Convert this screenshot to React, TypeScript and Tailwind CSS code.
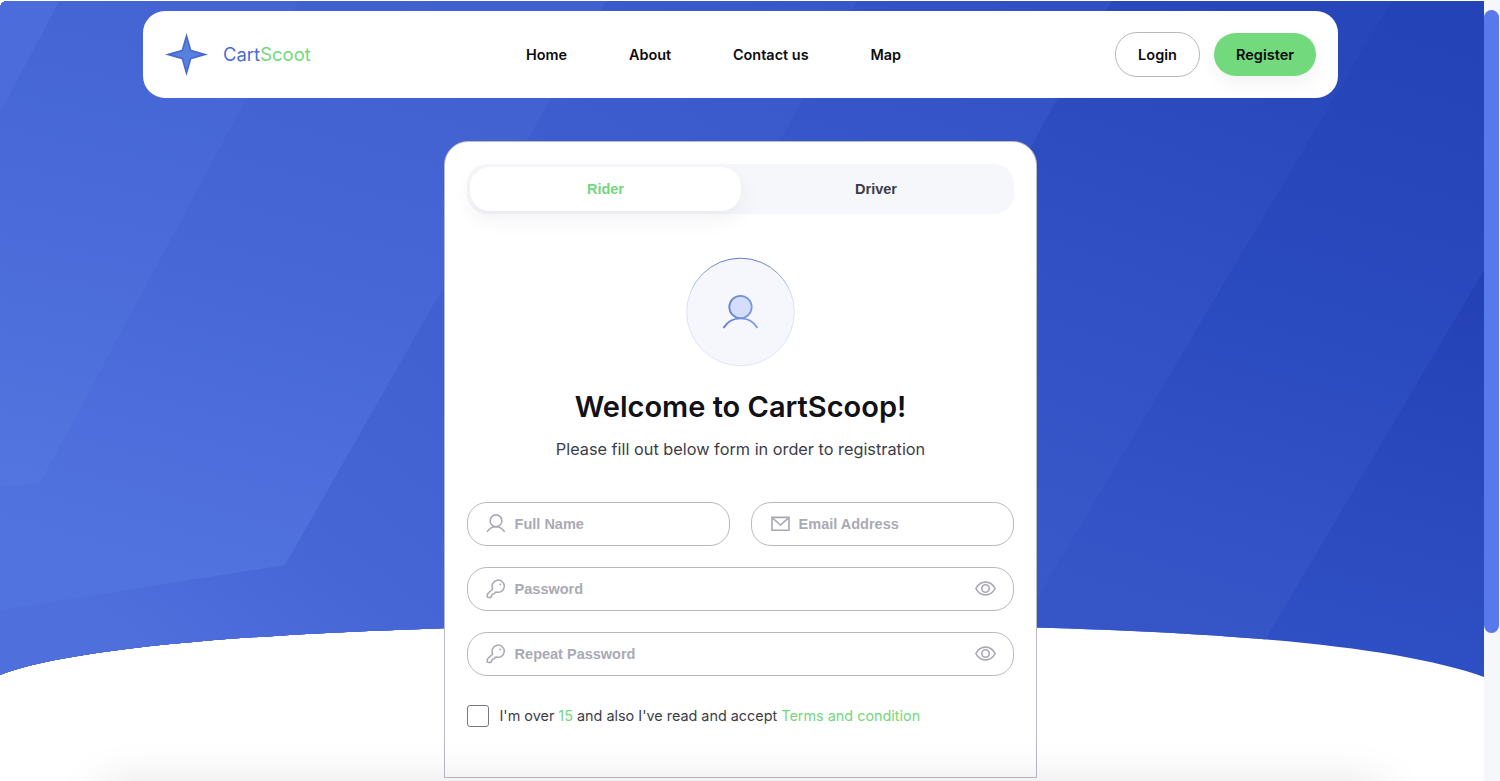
import React from "react";

const inter = "font-['Inter',sans-serif]";

function Backdrop() {
  return (
    <svg className="absolute inset-0 h-[781px] w-[1484px]" viewBox="0 0 1484 781" aria-hidden="true">
      <defs>
        <clipPath id="hero">
          <path d="M8 1H1484V677C1370 636 1110 624 742 624S90 640 0 675V9Q0 1 8 1Z" />
        </clipPath>
        <linearGradient id="g1" gradientUnits="userSpaceOnUse" x1="1484" y1="270" x2="1380" y2="670">
          <stop offset="0" stopColor="#2341b5" />
          <stop offset="1" stopColor="#2f50c4" />
        </linearGradient>
        <linearGradient id="g2" gradientUnits="userSpaceOnUse" x1="1420" y1="20" x2="1240" y2="640">
          <stop offset="0" stopColor="#2443b6" />
          <stop offset="0.5" stopColor="#2a4abf" />
          <stop offset="1" stopColor="#3656c8" />
        </linearGradient>
        <linearGradient id="g3" gradientUnits="userSpaceOnUse" x1="1280" y1="0" x2="1070" y2="600">
          <stop offset="0" stopColor="#2746ba" />
          <stop offset="0.5" stopColor="#3050c3" />
          <stop offset="1" stopColor="#3959cb" />
        </linearGradient>
        <linearGradient id="g4" gradientUnits="userSpaceOnUse" x1="1100" y1="0" x2="900" y2="600">
          <stop offset="0" stopColor="#2f4fc3" />
          <stop offset="1" stopColor="#4464d4" />
        </linearGradient>
        <linearGradient id="g4b" gradientUnits="userSpaceOnUse" x1="820" y1="0" x2="420" y2="640">
          <stop offset="0" stopColor="#3858ca" />
          <stop offset="0.5" stopColor="#4060d1" />
          <stop offset="1" stopColor="#4768d7" />
        </linearGradient>
        <linearGradient id="g5" gradientUnits="userSpaceOnUse" x1="420" y1="0" x2="260" y2="600">
          <stop offset="0" stopColor="#4060d0" />
          <stop offset="0.5" stopColor="#4767d7" />
          <stop offset="1" stopColor="#5173df" />
        </linearGradient>
        <linearGradient id="g6" gradientUnits="userSpaceOnUse" x1="180" y1="0" x2="80" y2="490">
          <stop offset="0" stopColor="#4464d4" />
          <stop offset="0.5" stopColor="#4a6bd9" />
          <stop offset="1" stopColor="#5275df" />
        </linearGradient>
        <linearGradient id="g0" gradientUnits="userSpaceOnUse" x1="440" y1="300" x2="160" y2="660">
          <stop offset="0" stopColor="#4060d0" />
          <stop offset="0.6" stopColor="#4666d6" />
          <stop offset="1" stopColor="#4e6fdc" />
        </linearGradient>
      </defs>
      <g clipPath="url(#hero)">
        <path d="M0 0H1484V781H0Z" fill="url(#g1)" />
        <path d="M0 0H1484V270L1265 640L1182 781H0Z" fill="url(#g2)" />
        <path d="M0 0H1392L1020 627L930 781H0Z" fill="url(#g3)" />
        <path d="M0 0H1112L780 600L680 781H0Z" fill="url(#g4)" />
        <path d="M0 0H858L525 600L425 781H0Z" fill="url(#g4b)" />
        <path d="M0 300H450V781H0Z" fill="url(#g0)" />
        <path d="M0 0H607L285 565L0 610Z" fill="url(#g5)" />
        <path d="M0 0H299L40 483L0 487Z" fill="url(#g6)" />
        <path d="M0 0H60L0 113Z" fill="#4b6cda" />
      </g>
    </svg>
  );
}

function StarLogo() {
  return (
    <svg className="size-[43px]" viewBox="0 0 43 43" aria-hidden="true">
      <path d="M21.5 0L26.300 16.700L43 21.500L26.300 26.300L21.500 43L16.700 26.300L0 21.500L16.700 16.700Z" fill="#4868ce" />
      <path d="M21.5 6L25 18L36 21.5L25 25L21.5 37L18 25L7 21.5L18 18Z" fill="#5682de" />
    </svg>
  );
}

function UserIcon() {
  return (
    <svg className="size-5" viewBox="0 0 20 20" fill="none" stroke="#a8a8b3" strokeWidth="1.6" aria-hidden="true">
      <circle cx="10" cy="6.800" r="5.900" />
      <path d="M1.100 17.900C2.900 14.700 6 12.700 9.800 12.700S16.800 14.700 18.600 17.900" />
    </svg>
  );
}

function MailIcon() {
  return (
    <svg className="size-5" viewBox="0 0 20 20" fill="none" stroke="#a8a8b3" strokeWidth="1.6" aria-hidden="true">
      <path d="M2 3.400H19V16.300H2Z" />
      <path d="M2.400 3.800L10.500 11L18.600 3.800" />
    </svg>
  );
}

function KeyIcon() {
  return (
    <svg className="size-5" viewBox="0 0 20 20" fill="none" stroke="#a8a8b3" strokeWidth="1.5" strokeLinejoin="round" strokeLinecap="round" aria-hidden="true">
      <path d="M6.600 9.700A6.100 6.100 0 1 1 10.200 13C9.200 12.900 8.900 13.500 8.700 14.300C8.500 15 7.900 15.100 7 15.100C6.100 15.100 5.800 15.600 5.700 16.600C5.500 18.200 4.400 18.700 2.800 18.600C1.300 18.600 .9 17.900 1.100 16.500C1.200 15.300 1.700 14.700 2.600 13.800L6.200 10.500C6.500 10.200 6.600 10 6.600 9.700Z" />
      <circle cx="14.300" cy="5.500" r=".95" fill="#a8a8b3" stroke="none" />
    </svg>
  );
}

function EyeIcon() {
  return (
    <svg className="mb-px h-[15px] w-[21px]" viewBox="0 0 21 15" fill="none" stroke="#a8a8b3" strokeWidth="1.6" aria-hidden="true">
      <path d="M.9 7.500C3 3.300 6.400 1.100 10.500 1.100S18 3.300 20.100 7.500C18 11.700 14.600 13.900 10.500 13.900S3 11.700 .9 7.500Z" />
      <circle cx="10.500" cy="7.500" r="3.700" />
    </svg>
  );
}

function Field({ icon, label, secret = false }: { icon: React.ReactNode; label: string; secret?: boolean }) {
  return (
    <div className="flex h-11 w-full items-center rounded-[20px] border border-[#b9b9c0] pr-[17px] pl-[18px] font-['Liberation_Sans',sans-serif] text-[14.5px] font-bold text-[#aaaab4]">
      {icon}
      <span className="ml-[8.6px] flex-1 pt-px">{label}</span>
      {secret && <EyeIcon />}
    </div>
  );
}

function Header() {
  return (
    <header className={`relative mx-auto flex h-[87px] w-[1195px] items-center rounded-[22px] bg-white px-[22px] ${inter}`}>
      <StarLogo />
      <span className="ml-[15px] w-[303px] pt-px text-[18.4px] tracking-[0.05px] text-[#4a6bd6]">
        Cart<span className="text-[#73d77d]">Scoot</span>
      </span>
      <nav className="flex gap-[61.8px] text-[14.45px] font-semibold text-[#0c0c10]">
        <a>Home</a>
        <a>About</a>
        <a>Contact us</a>
        <a>Map</a>
      </nav>
      <div className="ml-auto flex items-center gap-[14px] text-[14.5px] font-semibold text-[#0c0c10]">
        <button className="h-[45px] w-[85px] rounded-[22px] border border-[#b9b9c0]">Login</button>
        <button className="h-[43px] w-[102px] rounded-[22px] bg-[#73d97d] shadow-[0_8px_18px_rgba(0,0,0,0.05)]">Register</button>
      </div>
    </header>
  );
}

function Avatar() {
  return (
    <svg className="mt-[43px] ml-[218px] block size-[110px]" viewBox="0 0 110 110" fill="none" aria-hidden="true">
      <defs>
        <linearGradient id="ring" x1="0" y1="0" x2="0" y2="1">
          <stop offset="0" stopColor="#5a78cc" />
          <stop offset="0.35" stopColor="#d4dff9" />
          <stop offset="1" stopColor="#e0e7fa" />
        </linearGradient>
        <linearGradient id="person" gradientUnits="userSpaceOnUse" x1="37" y1="0" x2="73" y2="0">
          <stop offset="0" stopColor="#5f7cca" />
          <stop offset="1" stopColor="#819fe8" />
        </linearGradient>
      </defs>
      <circle cx="55.5" cy="55" r="53.8" fill="#f5f7fd" stroke="url(#ring)" />
      <path d="M38.500 71C42 65 48 61.300 55.500 61.300S69 65 72.500 71" stroke="url(#person)" strokeWidth="1.8" />
      <circle cx="55.500" cy="50" r="11.200" fill="#d4defa" stroke="url(#person)" strokeWidth="1.800" />
    </svg>
  );
}

export default function App() {
  return (
    <div className="relative flex h-[781px] w-[1500px] overflow-hidden bg-white">
      <main className="relative h-[781px] w-[1484px] shrink-0 overflow-hidden">
        <Backdrop />
        <div className="relative pt-[11px] pr-[3px]">
          <Header />
          <section className="relative mx-auto mt-[43px] h-[637px] w-[593px] rounded-t-[24px] border border-[#b9bac5] bg-white px-[22px] pt-[22px]">
            <div className="flex h-[50px] w-[547px] rounded-[20px] bg-[#f6f7fa] p-[3px] font-['Liberation_Sans',sans-serif] text-[14.5px] font-bold">
              <button className="h-11 w-[271px] rounded-[20px] bg-white pt-px text-[#73d77d] shadow-[0_8px_22px_rgba(0,0,0,0.06)]">Rider</button>
              <button className="h-11 w-[270px] pt-px text-[#3c3c48]">Driver</button>
            </div>
            <Avatar />
            <h1 className={`mt-[20px] text-center text-[29px] leading-10 font-semibold text-[#111116] ${inter}`}>Welcome to CartScoop!</h1>
            <p className={`mt-[10px] text-center text-[16.3px] leading-6 text-[#3d3d48] ${inter}`}>Please fill out below form in order to registration</p>
            <form className="mt-[41px] flex w-[547px] flex-col gap-[21px]">
              <div className="flex gap-[21px]">
                <Field icon={<UserIcon />} label="Full Name" />
                <Field icon={<MailIcon />} label="Email Address" />
              </div>
              <Field icon={<KeyIcon />} label="Password" secret />
              <Field icon={<KeyIcon />} label="Repeat Password" secret />
              <label className={`mt-[8px] flex items-center text-[14.4px] text-[#3d3d48] ${inter}`}>
                <span className="mr-[10.5px] size-[22px] rounded-[3px] border border-[#777780]" />
                <span>
                  I'm over <span className="text-[#73d77d]">15</span> and also I've read and accept <span className="text-[#73d77d]">Terms and condition</span>
                </span>
              </label>
            </form>
          </section>
        </div>
        <div className="absolute top-[798px] left-[110px] h-5 w-[1264px] shadow-[0_0_50px_6px_rgba(0,0,0,0.18)]" />
      </main>
      <aside className="h-[781px] w-4 bg-[#f6f7fa] pt-[10px] pr-px">
        <div className="h-[623px] w-[15px] rounded-full bg-[#5779eb]" />
      </aside>
    </div>
  );
}
